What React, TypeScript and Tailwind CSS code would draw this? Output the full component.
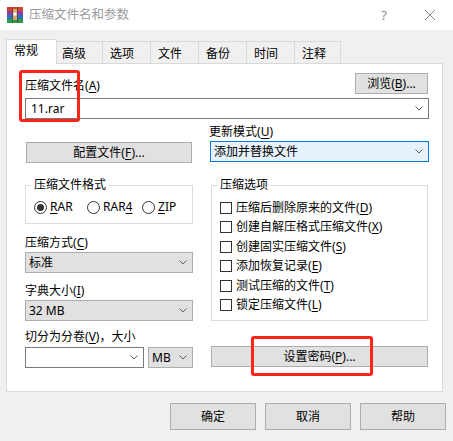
import React from 'react';

function RarIcon() {
  return (
    <svg width="16" height="16" viewBox="0 0 16 16">
      <rect x="0" y="0" width="16" height="4" fill="#d0452f" />
      <rect x="0" y="4" width="16" height="4" fill="#8b3fa0" />
      <rect x="0" y="8" width="16" height="4" fill="#2f6fc0" />
      <rect x="0" y="12" width="16" height="4" fill="#2e9a48" />
      <rect x="5" y="0" width="1" height="16" fill="#3a2a2a" opacity="0.5" />
      <rect x="10" y="0" width="1" height="16" fill="#3a2a2a" opacity="0.5" />
      <rect x="6" y="2" width="4" height="11" fill="#d9a866" />
      <rect x="6.5" y="5.5" width="3" height="3" fill="#ffffff" />
    </svg>
  );
}

function Chevron() {
  return (
    <svg width="8" height="5" viewBox="0 0 8 5" className="shrink-0">
      <path d="M0.5 0.5 L4 4 L7.5 0.5" fill="none" stroke="#606060" strokeWidth="1" />
    </svg>
  );
}

function Acc({ c }: { c: string }) {
  return (
    <span>
      (<span className="underline underline-offset-2">{c}</span>)
    </span>
  );
}

type ComboKind = 'white' | 'gray' | 'focus';

function Combo({ kind, children, className = '' }: { kind: ComboKind; children?: React.ReactNode; className?: string }) {
  const look =
    kind === 'white'
      ? 'bg-white border-[#7a7a7a]'
      : kind === 'focus'
      ? 'bg-[#e5f1fb] border-[#0078d7]'
      : 'bg-[#e1e1e1] border-[#adadad]';
  return (
    <div className={`flex items-center border ${look} pl-[3px] pr-[5px] ${className}`}>
      <span className="flex-1 truncate">{children}</span>
      <Chevron />
    </div>
  );
}

function Btn({ children, className = '' }: { children: React.ReactNode; className?: string }) {
  return (
    <div className={`flex items-center justify-center bg-[#e1e1e1] border border-[#adadad] ${className}`}>
      {children}
    </div>
  );
}

function Group({ title, className = '', children }: { title: string; className?: string; children: React.ReactNode }) {
  return (
    <div className={`relative border border-[#dcdcdc] ${className}`}>
      <span className="absolute -top-[9px] left-[5px] bg-white px-[3px]">{title}</span>
      {children}
    </div>
  );
}

function Radio({ checked, children, className = '' }: { checked?: boolean; children: React.ReactNode; className?: string }) {
  return (
    <div className={`flex items-center gap-[3px] ${className}`}>
      <div className="w-[13px] h-[13px] rounded-full border border-[#333333] bg-white flex items-center justify-center">
        {checked && <div className="w-[7px] h-[7px] rounded-full bg-[#333333]" />}
      </div>
      <span>{children}</span>
    </div>
  );
}

function Check({ label, c }: { label: string; c: string }) {
  return (
    <div className="flex items-center h-[19.5px] gap-[4px]">
      <div className="w-[12px] h-[12px] border border-[#333333] bg-white shrink-0" />
      <span className="whitespace-nowrap">
        {label}
        <Acc c={c} />
      </span>
    </div>
  );
}

const tabs = [
  { name: '高级', w: 'w-[46px] pl-[5px]' },
  { name: '选项', w: 'w-[48px] pl-[7px]' },
  { name: '文件', w: 'w-[48px] pl-[7px]' },
  { name: '备份', w: 'w-[48px] pl-[7px]' },
  { name: '时间', w: 'w-[48px] pl-[7px]' },
  { name: '注释', w: 'w-[46px] pl-[7px]' },
];

export default function App() {
  return (
    <div className="relative w-[453px] h-[441px] overflow-hidden bg-[#f0f0f0] text-black text-[12px] leading-[16px] font-['Noto_Sans','Noto_Sans_CJK_SC',sans-serif]">
      {/* title bar */}
      <div className="h-[30px] bg-white flex items-center">
        <div className="ml-[7px]">
          <RarIcon />
        </div>
        <span className="ml-[6px] text-[12.5px] text-[#9a9a9a]">压缩文件名和参数</span>
        <span className="ml-auto text-[13px] text-[#8a8a8a]">?</span>
        <svg width="10" height="10" viewBox="0 0 10 10" className="ml-[38px] mr-[18px]">
          <path d="M0 0 L10 10 M10 0 L0 10" stroke="#8a8a8a" strokeWidth="1" />
        </svg>
      </div>

      <div className="px-[6px] pt-[9px]">
        {/* tabs */}
        <div className="flex items-end h-[24px]">
          <div className="relative z-10 w-[51px] h-[25px] -mb-[1px] bg-white border border-b-0 border-[#d9d9d9] pl-[7px] pt-[3px]">
            常规
          </div>
          {tabs.map((t) => (
            <div
              key={t.name}
              className={`h-[22px] border border-l-0 border-b-0 border-[#d9d9d9] pt-[4px] ${t.w}`}
            >
              {t.name}
            </div>
          ))}
        </div>

        {/* panel */}
        <div className="w-[437px] h-[329px] bg-white border border-[#d9d9d9] pl-[18px] pr-[13px]">
          <div className="mt-[9px] flex items-end justify-between h-[21px]">
            <span>
              压缩文件名
              <Acc c="A" />
            </span>
            <Btn className="w-[73px] h-[21px] mr-[1px]">
              浏览
              <Acc c="B" />
              ...
            </Btn>
          </div>
          <Combo kind="white" className="mt-[4px] h-[21px] pl-[5px]">
            11.rar
          </Combo>

          <div className="grid grid-cols-[168px_219px] gap-x-[17px]">
            {/* left */}
            <div className="flex flex-col">
              <Btn className="mt-[23px] mx-[1px] h-[21px]">
                配置文件
                <Acc c="F" />
                ...
              </Btn>
              <Group title="压缩文件格式" className="mt-[22px] h-[39px]">
                <div className="flex items-center h-full pt-[5px] pl-[8px]">
                  <Radio checked className="w-[53px]">
                    <span className="underline underline-offset-2">R</span>AR
                  </Radio>
                  <Radio className="w-[55px]">
                    RAR<span className="underline underline-offset-2">4</span>
                  </Radio>
                  <Radio>
                    <span className="underline underline-offset-2">Z</span>IP
                  </Radio>
                </div>
              </Group>
              <span className="mt-[11px]">
                压缩方式
                <Acc c="C" />
              </span>
              <Combo kind="gray" className="mt-[1px] h-[21px]">
                标准
              </Combo>
              <span className="mt-[10px]">
                字典大小
                <Acc c="I" />
              </span>
              <Combo kind="gray" className="mt-[1px] h-[21px]">
                32 MB
              </Combo>
              <span className="mt-[8px]">
                切分为分卷
                <Acc c="V" />
                ，大小
              </span>
              <div className="mt-[2px] flex gap-[4px]">
                <Combo kind="white" className="w-[119px] h-[21px]" />
                <Combo kind="gray" className="w-[45px] h-[21px]">
                  MB
                </Combo>
              </div>
            </div>

            {/* right */}
            <div className="flex flex-col">
              <span className="mt-[5px] -ml-[1px]">
                更新模式
                <Acc c="U" />
              </span>
              <Combo kind="focus" className="mt-[1px] h-[21px]">
                添加并替换文件
              </Combo>
              <Group title="压缩选项" className="mt-[23px] mx-[1px] h-[136px]">
                <div className="pt-[12px] pl-[8px]">
                  <Check label="压缩后删除原来的文件" c="D" />
                  <Check label="创建自解压格式压缩文件" c="X" />
                  <Check label="创建固实压缩文件" c="S" />
                  <Check label="添加恢复记录" c="E" />
                  <Check label="测试压缩的文件" c="T" />
                  <Check label="锁定压缩文件" c="L" />
                </div>
              </Group>
              <Btn className="mt-[25px] mx-[1px] h-[21px]">
                设置密码
                <Acc c="P" />
                ...
              </Btn>
            </div>
          </div>
        </div>

        {/* bottom buttons */}
        <div className="mt-[11px] flex justify-end gap-[9px] mr-[1px]">
          <Btn className="w-[86px] h-[27px]">确定</Btn>
          <Btn className="w-[86px] h-[27px]">取消</Btn>
          <Btn className="w-[86px] h-[27px]">帮助</Btn>
        </div>
      </div>

      {/* red annotation boxes */}
      <div className="absolute left-[19px] top-[70px] w-[61px] h-[52px] border-[3px] border-[#ff2418] rounded-[3px]" />
      <div className="absolute left-[251px] top-[336px] w-[122px] h-[40px] border-[3px] border-[#ff2418] rounded-[3px]" />
    </div>
  );
}
